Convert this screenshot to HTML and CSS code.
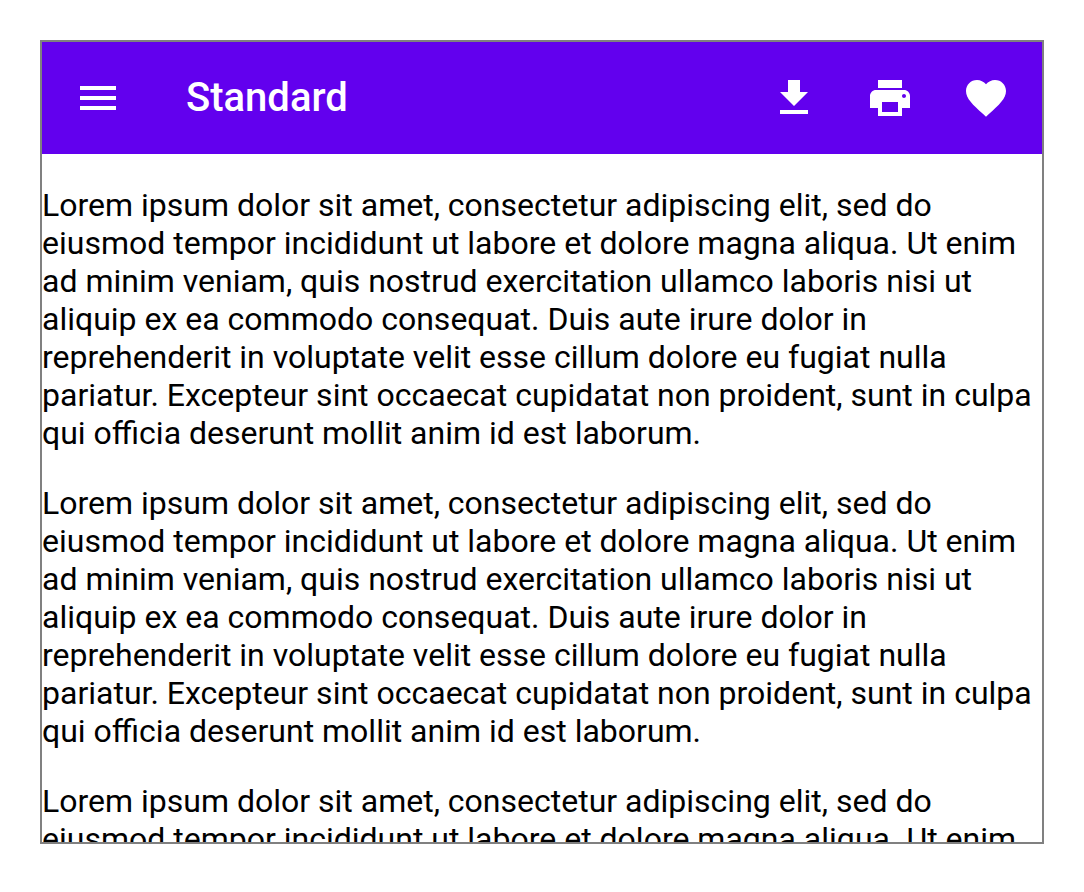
FILE: index.html
```html
<!DOCTYPE html>
<html lang="en">
<head>
<meta charset="utf-8">
<meta name="viewport" content="width=device-width, initial-scale=1">
<title>Standard</title>
<link rel="stylesheet" href="styles.css">
</head>
<body>
<div class="frame">
  <header class="app-bar">
    <button class="icon-button" type="button" aria-label="Open navigation menu">
      <svg class="icon" viewBox="0 0 24 24" aria-hidden="true"><path d="M3 18h18v-2H3v2zm0-5h18v-2H3v2zm0-7v2h18V6H3z"/></svg>
    </button>
    <h1 class="title">Standard</h1>
    <div class="actions">
      <button class="icon-button" type="button" aria-label="Download">
        <svg class="icon" viewBox="0 0 24 24" aria-hidden="true"><path d="M19 9h-4V3H9v6H5l7 7 7-7zM5 18v2h14v-2H5z"/></svg>
      </button>
      <button class="icon-button" type="button" aria-label="Print">
        <svg class="icon" viewBox="0 0 24 24" aria-hidden="true"><path d="M19 8H5c-1.66 0-3 1.34-3 3v6h4v4h12v-4h4v-6c0-1.66-1.34-3-3-3zm-3 11H8v-5h8v5zm3-7c-.55 0-1-.45-1-1s.45-1 1-1 1 .45 1 1-.45 1-1 1zm-1-9H6v4h12V3z"/></svg>
      </button>
      <button class="icon-button" type="button" aria-label="Favorite">
        <svg class="icon" viewBox="0 0 24 24" aria-hidden="true"><path d="M12 21.35l-1.45-1.32C5.4 15.36 2 12.28 2 8.5 2 5.42 4.42 3 7.5 3c1.74 0 3.41.81 4.5 2.09C13.09 3.81 14.76 3 16.5 3 19.58 3 22 5.42 22 8.5c0 3.78-3.4 6.86-8.55 11.54L12 21.35z"/></svg>
      </button>
    </div>
  </header>
  <main class="content">
    <p class="paragraph">Lorem ipsum dolor sit amet, consectetur adipiscing elit, sed do eiusmod tempor incididunt ut labore et dolore magna aliqua. Ut enim ad minim veniam, quis nostrud exercitation ullamco laboris nisi ut aliquip ex ea commodo consequat. Duis aute irure dolor in reprehenderit in voluptate velit esse cillum dolore eu fugiat nulla pariatur. Excepteur sint occaecat cupidatat non proident, sunt in culpa qui officia deserunt mollit anim id est laborum.</p>
    <p class="paragraph">Lorem ipsum dolor sit amet, consectetur adipiscing elit, sed do eiusmod tempor incididunt ut labore et dolore magna aliqua. Ut enim ad minim veniam, quis nostrud exercitation ullamco laboris nisi ut aliquip ex ea commodo consequat. Duis aute irure dolor in reprehenderit in voluptate velit esse cillum dolore eu fugiat nulla pariatur. Excepteur sint occaecat cupidatat non proident, sunt in culpa qui officia deserunt mollit anim id est laborum.</p>
    <p class="paragraph">Lorem ipsum dolor sit amet, consectetur adipiscing elit, sed do eiusmod tempor incididunt ut labore et dolore magna aliqua. Ut enim</p>
  </main>
</div>
</body>
</html>
```
FILE: styles.css
```css
* {
  box-sizing: border-box;
}

body {
  margin: 0;
  height: 100vh;
  padding: 40px 40px 48px;
  background: #fff;
  color: #000;
  font-family: Roboto, "Noto Sans", sans-serif;
}

.frame {
  display: flex;
  flex-direction: column;
  height: 100%;
  border: 2px solid #808080;
  overflow: hidden;
}

.app-bar {
  display: flex;
  align-items: center;
  flex: none;
  padding: 8px;
  background: #6200ee;
  color: #fff;
}

.icon-button {
  display: flex;
  padding: 24px;
  border: 0;
  background: none;
  color: inherit;
  cursor: pointer;
}

.icon {
  width: 48px;
  height: 48px;
  fill: currentColor;
}

.title {
  flex: 1;
  margin: 0;
  padding-left: 40px;
  font-size: 40px;
  font-weight: 500;
  line-height: 64px;
}

.actions {
  display: flex;
}

.content {
  flex: 1;
  min-height: 0;
  overflow: hidden;
}

.paragraph {
  margin: 32px 0;
  font-size: 32px;
  line-height: 38px;
}
```
